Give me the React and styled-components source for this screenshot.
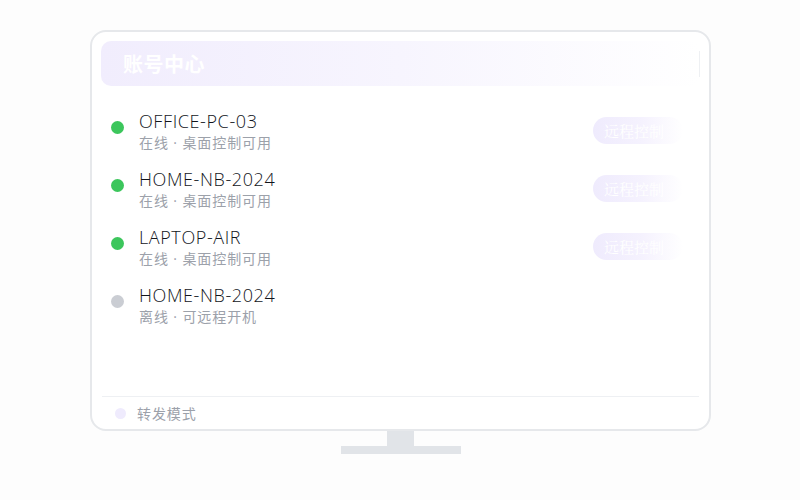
import styled, { createGlobalStyle } from 'styled-components'

const GlobalStyle = createGlobalStyle`
    html, body {
        margin: 0;
        padding: 0;
        background: #fdfdfd;
        font-family: "Open Sans", "Noto Sans CJK SC", sans-serif;
    }
`

const devices = [
    { name: 'OFFICE-PC-03', status: '在线 · 桌面控制可用', online: true },
    { name: 'HOME-NB-2024', status: '在线 · 桌面控制可用', online: true },
    { name: 'LAPTOP-AIR', status: '在线 · 桌面控制可用', online: true },
    { name: 'HOME-NB-2024', status: '离线 · 可远程开机', online: false },
]

const App = () => {
    return (
        <>
            <GlobalStyle />
            <Page>
                <Monitor>
                    <Header>
                        <Title>账号中心</Title>
                        <HeaderMark />
                    </Header>
                    <List>
                        {devices.map((d, i) => (
                            <Row key={i}>
                                <Dot $online={d.online} />
                                <Info>
                                    <Name>{d.name}</Name>
                                    <Status>{d.status}</Status>
                                </Info>
                                {d.online && <RemoteButton>远程控制</RemoteButton>}
                            </Row>
                        ))}
                    </List>
                    <Footer>
                        <FooterDot />
                        <FooterText>转发模式</FooterText>
                    </Footer>
                </Monitor>
                <Neck />
                <Base />
            </Page>
        </>
    )
}

const Page = styled.div`
    display: flex;
    flex-direction: column;
    align-items: center;
    padding: 30px 0 0 1px;
    height: 470px;
`
const Monitor = styled.div`
    box-sizing: border-box;
    width: 621px;
    height: 401px;
    border: 2px solid #e6e8eb;
    border-radius: 16px;
    background: #ffffff;
    padding: 9px 9px 0 9px;
    display: flex;
    flex-direction: column;
`
const Header = styled.div`
    height: 45px;
    border-radius: 10px;
    background: linear-gradient(90deg, #f1edfd 0%, #f7f5fe 50%, #ffffff 100%);
    display: flex;
    align-items: center;
    justify-content: space-between;
    padding: 0 0 0 22px;
    flex-shrink: 0;
`
const Title = styled.div`
    color: #ffffff;
    font-family: "Noto Sans CJK SC", sans-serif;
    font-size: 20px;
    font-weight: 700;
    letter-spacing: 0.5px;
`
const HeaderMark = styled.span`
    width: 1px;
    height: 26px;
    background: #eef0f3;
`
const List = styled.div`
    display: flex;
    flex-direction: column;
    gap: 16px;
    padding: 25px 0 0 10px;
    flex: 1;
`
const Row = styled.div`
    display: flex;
    align-items: flex-start;
    height: 42px;
    padding-right: 17px;
`
const Dot = styled.span`
    width: 13px;
    height: 13px;
    border-radius: 50%;
    margin-top: 10px;
    margin-right: 15px;
    flex-shrink: 0;
    background: ${(p) => (p.$online ? '#3cc65c' : '#cacdd3')};
`
const Info = styled.div`
    display: flex;
    flex-direction: column;
    flex: 1;
`
const Name = styled.div`
    font-size: 18px;
    font-weight: 300;
    line-height: 22px;
    letter-spacing: 0.6px;
    margin-top: -1px;
    margin-bottom: 1px;
    color: #12151b;
`
const Status = styled.div`
    font-size: 14px;
    line-height: 20px;
    letter-spacing: 0.9px;
    color: #9ca1aa;
`
const RemoteButton = styled.button`
    margin-top: 6px;
    width: 90px;
    height: 27px;
    border: none;
    border-radius: 14px;
    padding: 0 0 0 11px;
    text-align: left;
    color: #ffffff;
    font-family: "Noto Serif CJK SC", "Liberation Serif", serif;
    font-size: 15px;
    background: linear-gradient(90deg, #efebfd 0%, #f5f2fe 55%, #ffffff 100%);
`
const Footer = styled.div`
    height: 32px;
    border-top: 1px solid #eef0f3;
    margin: 0 1px;
    display: flex;
    align-items: center;
    padding-left: 13px;
    gap: 11px;
    flex-shrink: 0;
`
const FooterDot = styled.span`
    width: 11px;
    height: 11px;
    border-radius: 50%;
    background: #efebfd;
`
const FooterText = styled.span`
    font-size: 14px;
    letter-spacing: 0.9px;
    color: #9ca1aa;
`
const Neck = styled.div`
    width: 27px;
    height: 15px;
    background: #e1e4e8;
`
const Base = styled.div`
    width: 120px;
    height: 8px;
    background: #e1e4e8;
`

export default App
